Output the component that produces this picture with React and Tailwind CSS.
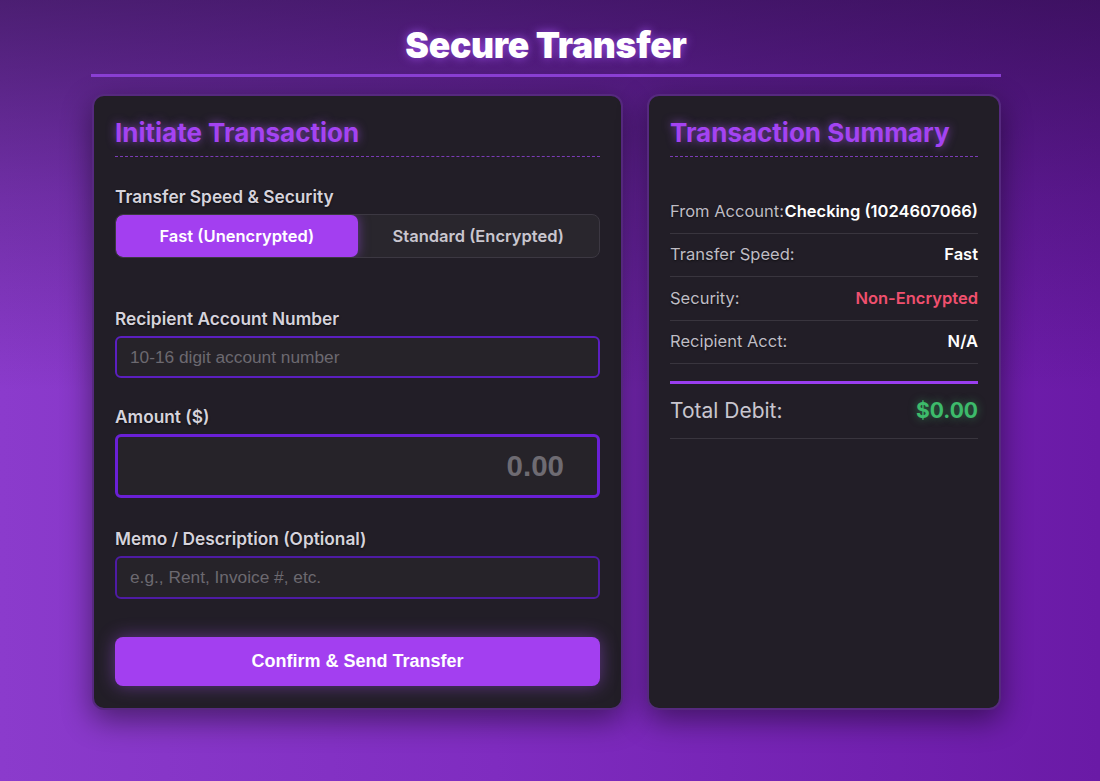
import React, { useState } from 'react';

const summaryRows = [
  { label: 'From Account:', value: 'Checking (1024607066)', tone: 'text-white' },
  { label: 'Transfer Speed:', value: 'Fast', tone: 'text-white' },
  { label: 'Security:', value: 'Non-Encrypted', tone: 'text-[#f0506e]' },
  { label: 'Recipient Acct:', value: 'N/A', tone: 'text-white' },
];

function Field({ label, children }) {
  return (
    <div>
      <label className="block text-[17.3px] leading-[24px] font-semibold text-[#d6d3dc] mb-[5px] [text-shadow:0_1px_2px_rgba(0,0,0,0.6)]">{label}</label>
      {children}
    </div>
  );
}

export default function App() {
  const [speed, setSpeed] = useState('fast');

  const active = 'flex-1 rounded-[7px] bg-[#a33ff0] text-white text-[16.5px] font-semibold shadow-[0_0_12px_rgba(168,85,247,0.5)]';
  const idle = 'flex-1 text-[#c9c6cf] text-[16.5px] font-semibold';

  return (
    <div className="min-h-screen w-full bg-[linear-gradient(180deg,rgba(30,10,50,0.58)_0%,rgba(30,10,50,0.25)_25%,rgba(30,10,50,0)_50%),linear-gradient(90deg,#8b3bcc_0%,#7f2cc0_45%,#6a1aa6_100%)] font-['Inter',sans-serif]">
      <div className="w-[910px] ml-[91px] pt-[24px] pb-[73px]">
        {/* Header */}
        <h1 className="text-center text-[35.5px] leading-[44px] font-black text-white tracking-[-0.3px] [text-shadow:0_0_10px_rgba(168,85,247,0.8)]">
          Secure Transfer
        </h1>
        <div className="h-[3px] bg-[#8b3fd4] mt-[6px] mb-[17px]" />

        <div className="ml-[1px] grid grid-cols-[531px_354px] gap-[24px]">
          {/* Initiate Transaction */}
          <div className="bg-[#221e27] rounded-[12px] border-2 border-[#56297f] shadow-[0_10px_30px_rgba(0,0,0,0.45)] px-[21px] pt-[19px] pb-[22px] flex flex-col">
            <h2 className="text-[26px] leading-[36px] font-bold text-[#a443f2] [text-shadow:0_0_10px_rgba(168,85,247,0.7)]">
              Initiate Transaction
            </h2>
            <div className="border-b border-dashed border-[#7a3bb5] mt-[5px] mb-[28px]" />

            <Field label="Transfer Speed & Security">
              <div className="flex rounded-[8px] border border-[#3c3842] bg-[#29262d] h-[44px] overflow-hidden">
                <button onClick={() => setSpeed('fast')} className={speed === 'fast' ? active : idle}>
                  Fast (Unencrypted)
                </button>
                <button onClick={() => setSpeed('standard')} className={speed === 'standard' ? active : idle}>
                  Standard (Encrypted)
                </button>
              </div>
            </Field>

            <div className="mt-[49px]">
              <Field label="Recipient Account Number">
                <input
                  type="text"
                  placeholder="10-16 digit account number"
                  className="block w-full h-[42px] rounded-[6px] border-2 border-[#5b1fc0] bg-[#262329] px-[13px] text-[17.3px] text-white font-['Liberation_Sans',sans-serif] placeholder:text-[#6c6970] outline-none"
                />
              </Field>
            </div>

            <div className="mt-[27px]">
              <Field label="Amount ($)">
                <input
                  type="text"
                  placeholder="0.00"
                  className="block w-full h-[64px] rounded-[6px] border-[3px] border-[#6a20d6] bg-[#262329] pr-[33px] text-right text-[29.5px] font-bold text-white font-['Liberation_Sans',sans-serif] placeholder:text-[#6e6b72] outline-none"
                />
              </Field>
            </div>

            <div className="mt-[29px]">
              <Field label="Memo / Description (Optional)">
                <input
                  type="text"
                  placeholder="e.g., Rent, Invoice #, etc."
                  className="block w-full h-[43px] rounded-[6px] border-2 border-[#4e1ba4] bg-[#262329] px-[13px] text-[17.3px] text-white font-['Liberation_Sans',sans-serif] placeholder:text-[#6c6970] outline-none"
                />
              </Field>
            </div>

            <button className="mt-[38px] h-[49px] w-full rounded-[8px] bg-[#a33ff0] text-white text-[18px] font-bold font-['Liberation_Sans',sans-serif] shadow-[0_0_18px_rgba(168,85,247,0.45)]">
              Confirm &amp; Send Transfer
            </button>
          </div>

          {/* Transaction Summary */}
          <div className="bg-[#221e27] rounded-[12px] border-2 border-[#56297f] shadow-[0_10px_30px_rgba(0,0,0,0.45)] px-[21px] pt-[19px] pb-[20px]">
            <h2 className="text-[26px] leading-[36px] font-bold text-[#a443f2] [text-shadow:0_0_10px_rgba(168,85,247,0.7)]">
              Transaction Summary
            </h2>
            <div className="border-b border-dashed border-[#7a3bb5] mt-[5px] mb-[33px]" />

            {summaryRows.map((row) => (
              <div key={row.label} className="flex justify-between items-center h-[43.5px] border-b border-[#39353e] text-[16.5px] whitespace-nowrap">
                <span className="text-[#bfbcc4] [text-shadow:0_1px_2px_rgba(0,0,0,0.6)]">{row.label}</span>
                <span className={`${row.tone} font-semibold`}>{row.value}</span>
              </div>
            ))}

            <div className="h-[3px] bg-[#9a3ef0] mt-[17px]" />
            <div className="flex justify-between items-center h-[55px] border-b border-[#39353e]">
              <span className="text-[21px] text-[#c9c6cf]">Total Debit:</span>
              <span className="text-[21px] font-bold text-[#3dbb6b] [text-shadow:0_0_8px_rgba(61,187,107,0.5)]">$0.00</span>
            </div>
          </div>
        </div>
      </div>
    </div>
  );
}
